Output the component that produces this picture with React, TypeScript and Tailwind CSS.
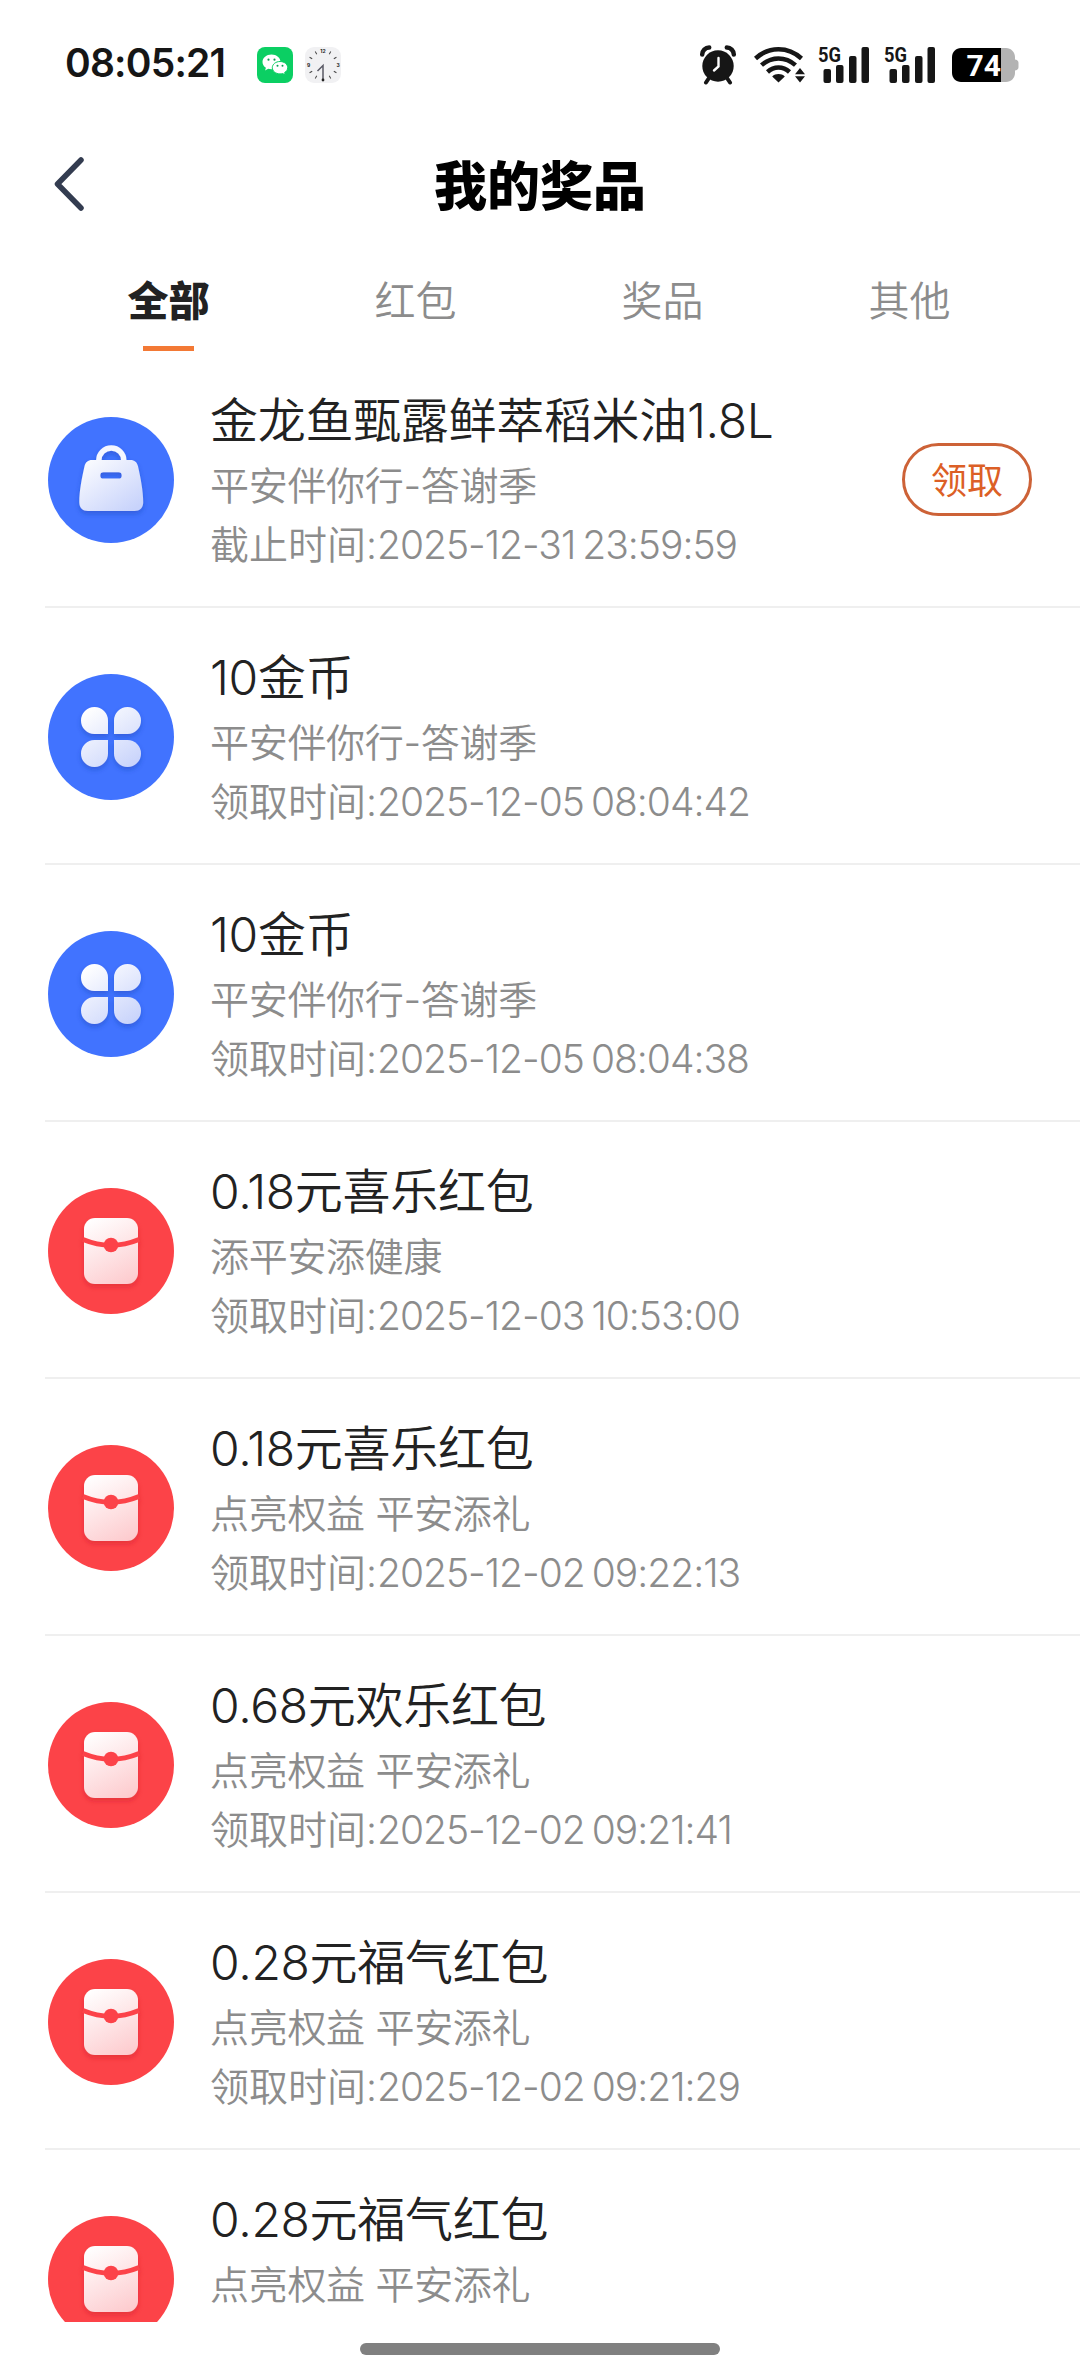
import clsx from "clsx";

type PrizeKind = "bag" | "clover" | "packet";

type Prize = {
  kind: PrizeKind;
  title: string;
  source: string;
  timeLabel: string;
  time: string;
  claimable?: boolean;
};

const tabs = ["全部", "红包", "奖品", "其他"];

const prizes: Prize[] = [
  { kind: "bag", title: "金龙鱼甄露鲜萃稻米油1.8L", source: "平安伴你行-答谢季", timeLabel: "截止时间:", time: "2025-12-31 23:59:59", claimable: true },
  { kind: "clover", title: "10金币", source: "平安伴你行-答谢季", timeLabel: "领取时间:", time: "2025-12-05 08:04:42" },
  { kind: "clover", title: "10金币", source: "平安伴你行-答谢季", timeLabel: "领取时间:", time: "2025-12-05 08:04:38" },
  { kind: "packet", title: "0.18元喜乐红包", source: "添平安添健康", timeLabel: "领取时间:", time: "2025-12-03 10:53:00" },
  { kind: "packet", title: "0.18元喜乐红包", source: "点亮权益 平安添礼", timeLabel: "领取时间:", time: "2025-12-02 09:22:13" },
  { kind: "packet", title: "0.68元欢乐红包", source: "点亮权益 平安添礼", timeLabel: "领取时间:", time: "2025-12-02 09:21:41" },
  { kind: "packet", title: "0.28元福气红包", source: "点亮权益 平安添礼", timeLabel: "领取时间:", time: "2025-12-02 09:21:29" },
  { kind: "packet", title: "0.28元福气红包", source: "点亮权益 平安添礼", timeLabel: "", time: "" }
];

function WechatIcon() {
  return (
    <svg viewBox="0 0 36 36" className="size-9">
      <rect width="36" height="36" rx="8" fill="#0bcf63" />
      <path d="M14.5 7.5c-5 0-9 3.3-9 7.4 0 2.4 1.3 4.4 3.4 5.8l-.8 2.7 3.1-1.6c1 .3 2.1.5 3.3.5 5 0 9-3.3 9-7.4s-4-7.4-9-7.4z" fill="#fff" />
      <path d="M23 14.5c-4.300 0-7.700 2.800-7.700 6.200s3.400 6.200 7.700 6.200c.9 0 1.800-.1 2.600-.4l2.700 1.400-.7-2.400c1.900-1.100 3.100-2.900 3.100-4.800 0-3.400-3.400-6.200-7.700-6.200z" fill="#fff" stroke="#0bcf63" strokeWidth="1" />
      <g fill="#0b9f52">
        <circle cx="11.500" cy="12.700" r="1.100" />
        <circle cx="17.500" cy="12.700" r="1.100" />
        <circle cx="20.500" cy="18.800" r="1" />
        <circle cx="25.500" cy="18.800" r="1" />
      </g>
    </svg>
  );
}

function ClockIcon() {
  return (
    <svg viewBox="0 0 36 36" className="size-9 overflow-visible">
      <rect width="36" height="36" rx="9" fill="#f1f1f3" />
      {[30, 60, 120, 150, 210, 240, 300, 330].map((angle) => (
        <path key={angle} d="M18 2.500v3" stroke="#444" strokeWidth="1" transform={`rotate(${angle} 18 18)`} />
      ))}
      <g fill="#222" fontFamily="Inter, sans-serif" fontSize="5" fontWeight="700" textAnchor="middle">
        <text x="18" y="5.500">12</text>
        <text x="33" y="20">3</text>
        <text x="3.500" y="20">9</text>
      </g>
      <path d="M18 32V18.500l-5.500 5.500" fill="none" stroke="#5a5a66" strokeWidth="1.500" />
      <circle cx="18" cy="33" r="1.400" fill="#222" />
    </svg>
  );
}

function AlarmIcon() {
  return (
    <svg viewBox="0 0 38 40" className="h-10 w-[38px]">
      <circle cx="19" cy="21" r="15.700" fill="#161616" />
      <path d="M3.200 9.500a7 7 0 0 1 7-7M27.800 2.500a7 7 0 0 1 7 7" fill="none" stroke="#161616" strokeWidth="4.500" strokeLinecap="round" />
      <path d="M10 33l-3 4.500M28 33l3 4.500" stroke="#161616" strokeWidth="4" strokeLinecap="round" />
      <path d="M19.500 13v8.500l-4.500 4" fill="none" stroke="#fff" strokeWidth="2.400" strokeLinecap="round" />
    </svg>
  );
}

function WifiIcon() {
  return (
    <svg viewBox="0 0 51 36" className="h-9 w-[51px]">
      <g fill="none" stroke="#161616" strokeWidth="4.500">
        <path d="M1.500 11.500C15 -.8 34 -.8 47.500 11.500" />
        <path d="M7.500 18.200c10-9 24-9 34 0" />
        <path d="M13.500 25c6.500-6 15.500-6 22 0" />
      </g>
      <path d="M24.500 35.500l-6.300-6c3.300-3.200 9.300-3.200 12.600 0z" fill="#161616" />
      <path d="M46 21l5 6.200H41zM46 35.500l5-6.200H41z" fill="#161616" />
    </svg>
  );
}

function SignalIcon() {
  return (
    <svg viewBox="0 0 52 38" className="h-[38px] w-[52px] overflow-visible">
      <text x="0" y="15.500" fill="#161616" fontFamily="Roboto, sans-serif" fontSize="21" fontWeight="700" textLength="23" lengthAdjust="spacingAndGlyphs">
        5G
      </text>
      <g fill="#161616">
        <rect x="5.500" y="23" width="7.500" height="14" rx="2" />
        <rect x="18" y="19" width="7.500" height="18" rx="2" />
        <rect x="31" y="10" width="7.500" height="27" rx="2" />
        <rect x="43.500" y="1" width="7.500" height="36" rx="2" />
      </g>
    </svg>
  );
}

function BatteryIcon() {
  return (
    <svg viewBox="0 0 67 34" className="h-[34px] w-[67px] overflow-visible">
      <path d="M49 0h5c5 0 9 4 9 9v2.500c2.500.5 3.500 1.500 3.500 3.500v4c0 2-1 3-3.500 3.500V25c0 5-4 9-9 9h-5z" fill="#b3b3b3" />
      <path d="M9 0h40v34H9c-5 0-9-4-9-9V9c0-5 4-9 9-9z" fill="#000" />
      <text x="14.500" y="27.800" fill="#fff" fontFamily="Roboto, sans-serif" fontSize="30" fontWeight="700" textLength="34.500" lengthAdjust="spacingAndGlyphs">
        74
      </text>
    </svg>
  );
}

function StatusBar() {
  return (
    <div className="flex h-[126px] items-center pr-[61px] pl-[65px]">
      <div className="w-48 font-['Inter'] text-[39px] font-semibold tracking-[-0.8px] text-[#161616]">08:05:21</div>
      <div className="mt-1 flex gap-3">
        <WechatIcon />
        <ClockIcon />
      </div>
      <div className="mt-1 ml-auto flex items-center">
        <AlarmIcon />
        <div className="ml-[17px]">
          <WifiIcon />
        </div>
        <div className="ml-[13px] flex gap-3.5">
          <SignalIcon />
          <SignalIcon />
        </div>
        <div className="ml-4">
          <BatteryIcon />
        </div>
      </div>
    </div>
  );
}

function Header() {
  return (
    <header className="grid h-[120px] grid-cols-[1fr_auto_1fr] items-center pr-[54px] pl-[54px]">
      <button type="button" aria-label="返回" className="mb-[5px] w-8">
        <svg viewBox="0 0 32 56" className="h-14 w-8">
          <path d="M27 4L3.500 28 27 52" fill="none" stroke="#333c50" strokeWidth="5.500" strokeLinecap="round" strokeLinejoin="round" />
        </svg>
      </button>
      <h1 className="pt-0.5 text-[53px] leading-none font-black text-black">我的奖品</h1>
    </header>
  );
}

function Tabs() {
  return (
    <nav className="flex h-[105px] pr-[47px] pl-[45px]">
      {tabs.map((tab, index) => (
        <button
          key={tab}
          type="button"
          className={clsx(
            "flex flex-1 flex-col items-center pt-[25px] text-[41px] leading-[60px]",
            index === 0 ? "font-black text-[#222]" : "font-[350] text-[#8c8c8c]"
          )}
        >
          {tab}
          {index === 0 ? <span className="mt-[15px] h-1.5 w-[51px] bg-[#f37935]" /> : null}
        </button>
      ))}
    </nav>
  );
}

function BagGlyph() {
  return (
    <>
      <path d="M50.800 46v-2.500a12.500 12.500 0 0 1 25 0V46" fill="none" stroke="#f5f7ff" strokeWidth="5.500" />
      <path
        fillRule="evenodd"
        d="M44 43h38.500c4 0 6.700 2.300 7.500 6.300 2.600 11.700 5.200 24.700 5.200 36 0 5.800-3.400 8.700-8.700 8.700H40c-5.300 0-8.700-2.900-8.700-8.700 0-11.300 2.600-24.300 5.200-36 .8-4 3.500-6.300 7.500-6.300zM55.500 55.200a3.200 3.200 0 0 0 0 6.400h15a3.200 3.200 0 0 0 0-6.400z"
        fill="url(#blueSheen)"
      />
    </>
  );
}

function CloverGlyph() {
  return (
    <g fill="url(#blueSheen)">
      <path d="M46.500 33A13.500 13.500 0 0 1 60 46.500V60H46.500a13.500 13.500 0 0 1 0-27z" />
      <path d="M79.500 33a13.500 13.500 0 0 1 0 27H66V46.500A13.500 13.500 0 0 1 79.500 33z" />
      <path d="M46.500 66H60v13.500A13.500 13.500 0 1 1 46.500 66z" />
      <path d="M66 66h13.500A13.500 13.500 0 1 1 66 79.500z" />
    </g>
  );
}

function PacketGlyph() {
  return (
    <>
      <rect x="36" y="30" width="54" height="66" rx="11" fill="url(#redSheen)" />
      <path d="M35 51.500q28 11.500 56 0" fill="none" stroke="#fc4348" strokeWidth="5" />
      <circle cx="63" cy="57" r="7.300" fill="#fc4348" />
    </>
  );
}

function PrizeIcon({ kind }: { kind: PrizeKind }) {
  const isPacket = kind === "packet";

  return (
    <svg viewBox="0 0 126 126" className="mt-[66px] size-[126px] shrink-0">
      <defs>
        <linearGradient id="blueSheen" gradientUnits="userSpaceOnUse" x1="40" y1="35" x2="82" y2="95">
          <stop stopColor="#fff" />
          <stop offset="1" stopColor="#c8d3fb" />
        </linearGradient>
        <linearGradient id="redSheen" gradientUnits="userSpaceOnUse" x1="45" y1="30" x2="80" y2="96">
          <stop stopColor="#fff" />
          <stop offset="1" stopColor="#fdcbce" />
        </linearGradient>
        <filter id={isPacket ? "redShadow" : "blueShadow"} x="-20%" y="-20%" width="140%" height="150%">
          <feDropShadow dx="0" dy="3" stdDeviation="2.500" floodColor={isPacket ? "#c81820" : "#1c3fae"} floodOpacity=".4" />
        </filter>
      </defs>
      <circle cx="63" cy="63" r="63" fill={isPacket ? "#fc4348" : "#4173ff"} />
      <g filter={isPacket ? "url(#redShadow)" : "url(#blueShadow)"}>
        {kind === "bag" ? <BagGlyph /> : null}
        {kind === "clover" ? <CloverGlyph /> : null}
        {kind === "packet" ? <PacketGlyph /> : null}
      </g>
    </svg>
  );
}

function PrizeRow({ prize }: { prize: Prize }) {
  return (
    <li className="ml-[45px] flex h-[257px] shrink-0 border-b-2 border-[#efefef] pl-[3px]">
      <PrizeIcon kind={prize.kind} />
      <div className="ml-9 flex-1 pt-[34px] font-[350] whitespace-nowrap">
        <div className="text-[48px] leading-[71px] tracking-[-0.3px] text-[#222]">{prize.title}</div>
        <div className="text-[39px] leading-[59px] tracking-[-0.3px] text-[#8c8c8c]">{prize.source}</div>
        <div className="text-[39px] leading-[59px] text-[#8c8c8c]">
          {prize.timeLabel}
          <span className="tracking-[-1px] [word-spacing:-3px]">{prize.time}</span>
        </div>
      </div>
      {prize.claimable ? (
        <button
          type="button"
          className="mt-[92px] mr-12 h-[73px] w-[130px] rounded-full border-[3px] border-[#cd6237] pt-0.5 text-[36px] leading-none text-[#dc5f26]"
        >
          领取
        </button>
      ) : null}
    </li>
  );
}

export default function App() {
  return (
    <div className="flex h-[2376px] w-[1080px] flex-col overflow-hidden bg-white font-['Inter','Noto_Sans_CJK_SC',sans-serif]">
      <StatusBar />
      <Header />
      <Tabs />
      <ul className="flex h-[1971px] shrink-0 flex-col overflow-hidden">
        {prizes.map((prize, index) => (
          <PrizeRow key={index} prize={prize} />
        ))}
      </ul>
      <div className="mx-auto mt-[21px] h-3 w-[360px] rounded-full bg-[#808080]" />
    </div>
  );
}
